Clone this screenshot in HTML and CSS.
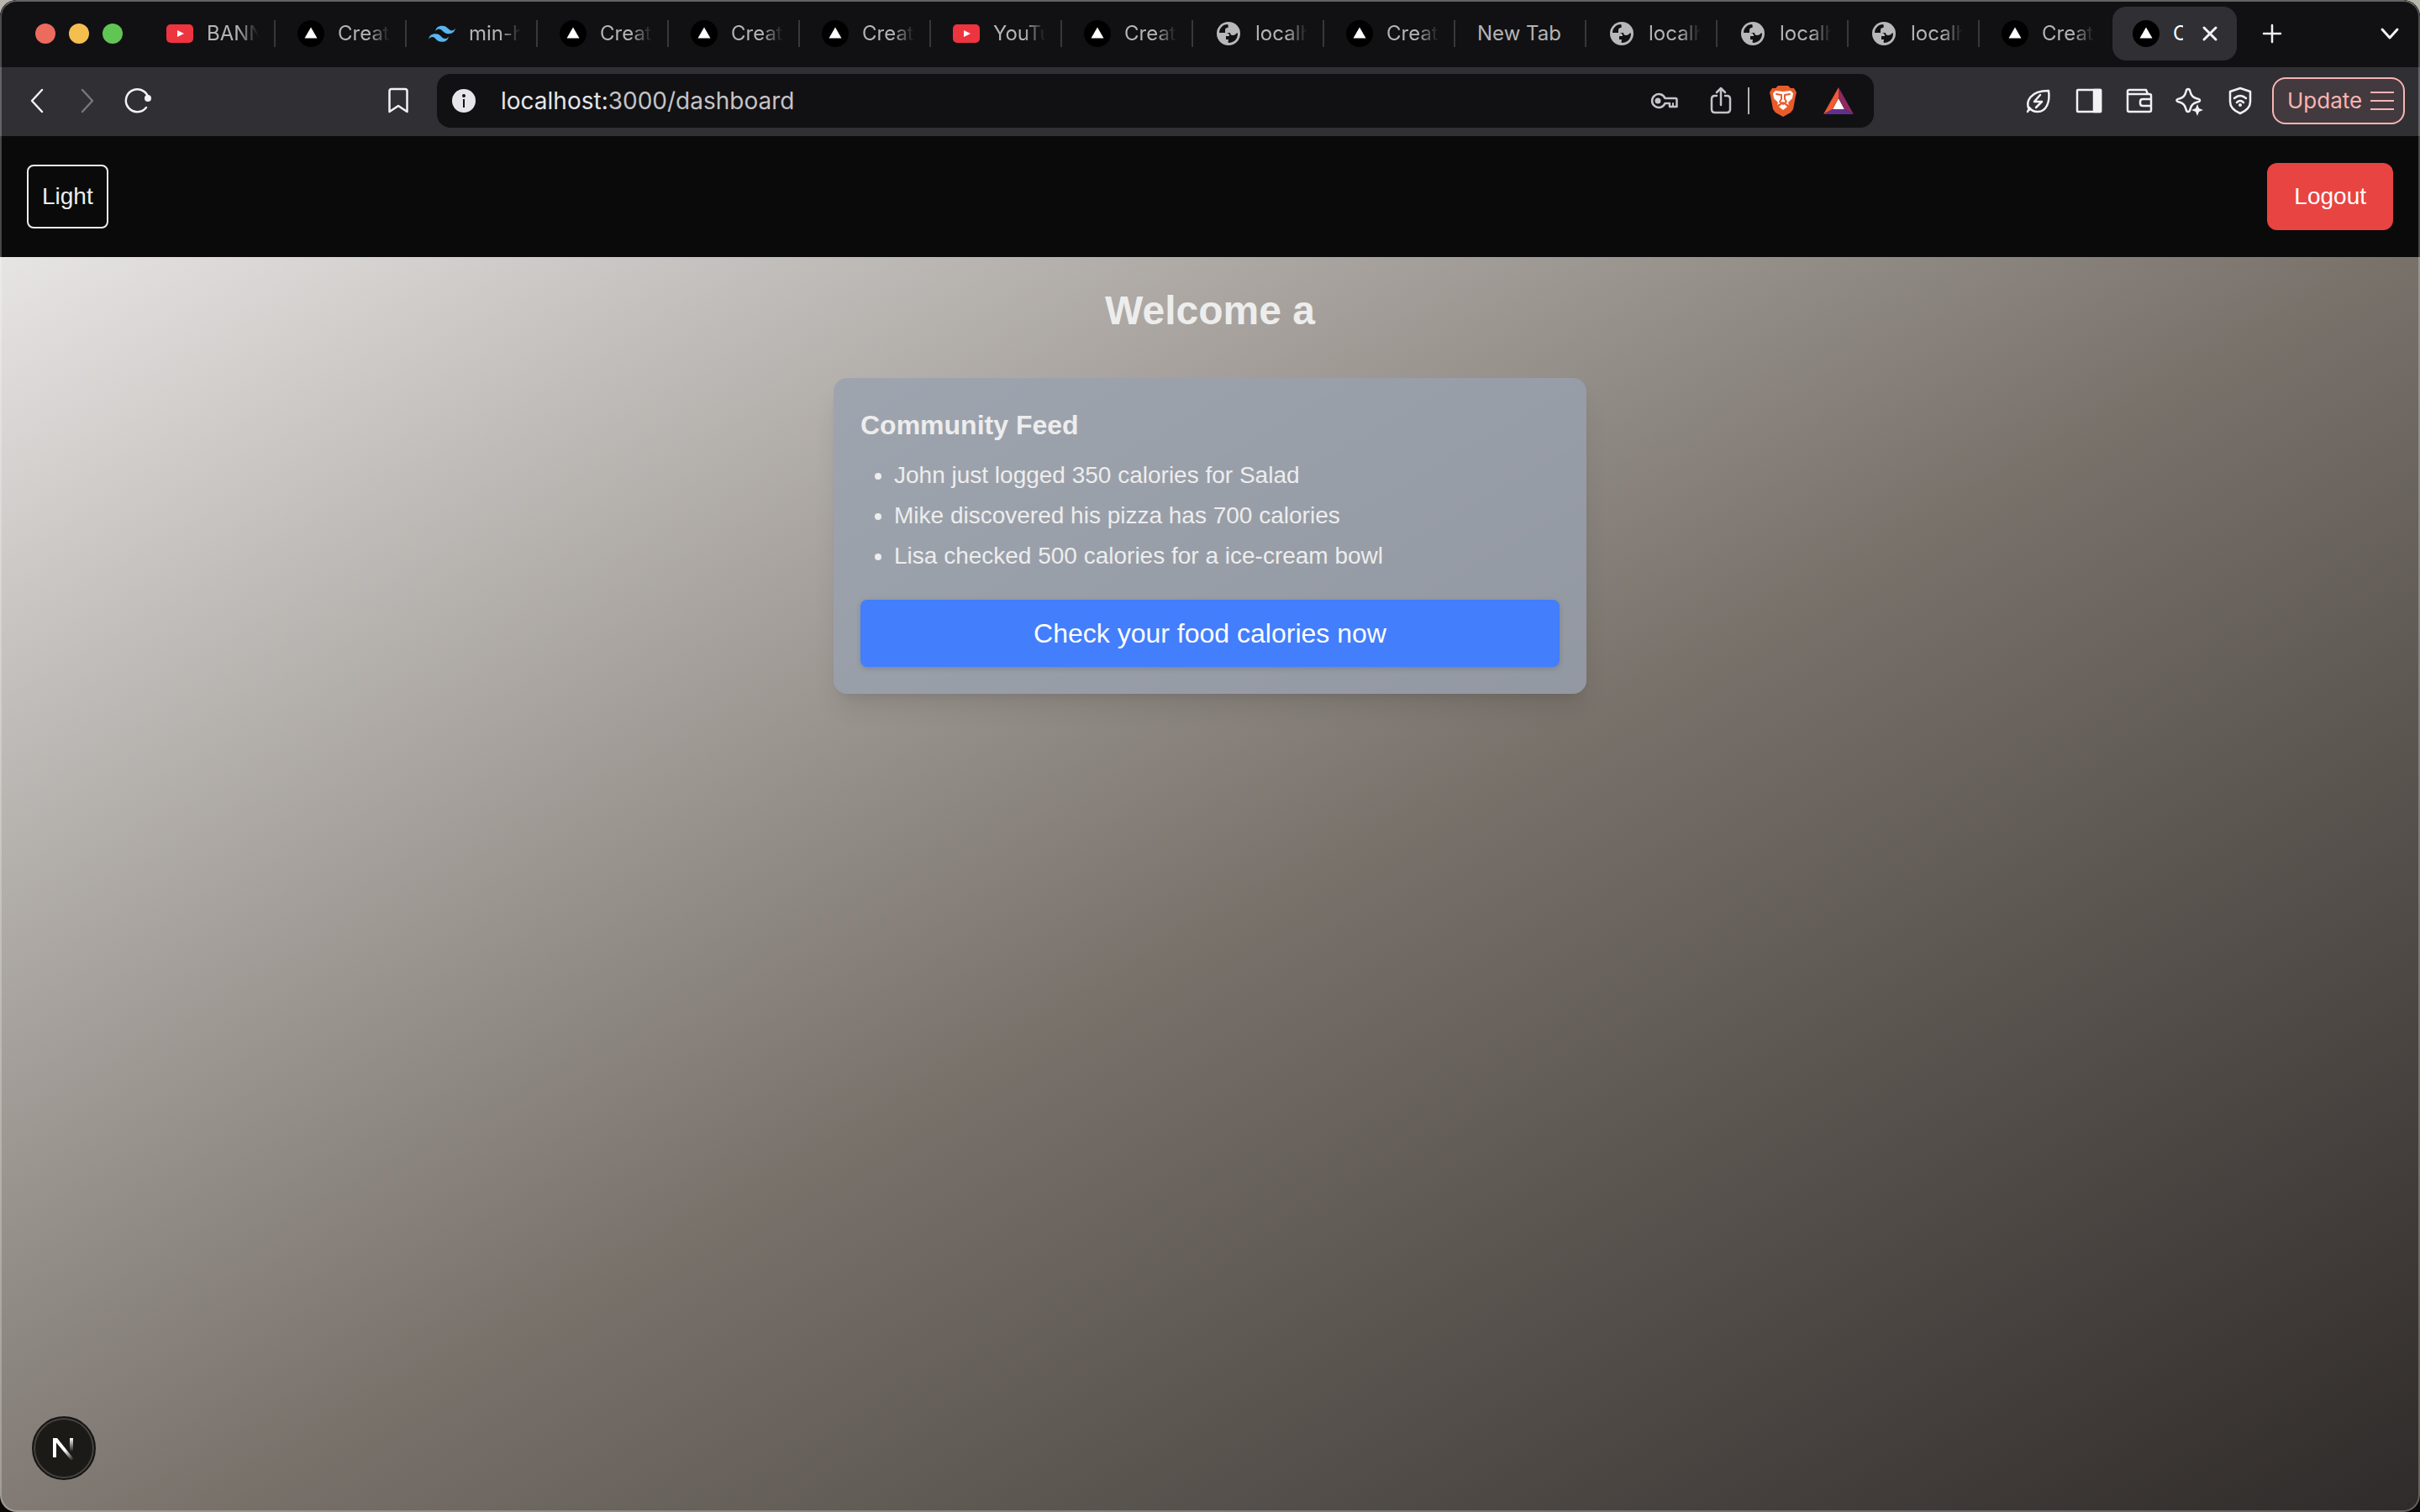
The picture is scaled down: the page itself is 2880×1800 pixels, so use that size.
FILE: index.html
```html
<!DOCTYPE html>
<html lang="en">
<head>
<meta charset="utf-8">
<title>Dashboard</title>
<link rel="stylesheet" href="styles.css">
</head>
<body>
<svg class="defs" aria-hidden="true">
  <symbol id="vercel" viewBox="0 0 32 32"><circle cx="16" cy="16" r="16" fill="#000"/><path d="M16 8.500 23.500 21.500h-15z" fill="#fff"/></symbol>
  <symbol id="youtube" viewBox="0 0 32 32"><rect y="5" width="32" height="22" rx="5" fill="#ee343f"/><path d="M13 12v8l8-4z" fill="#fff"/></symbol>
  <symbol id="tailwind" viewBox="0 0 24 24"><path fill="#5ab5f0" d="M12 5C8.800 5 6.800 6.600 6 9.800c1.200-1.600 2.600-2.200 4.200-1.800.913.230 1.565.890 2.288 1.624C13.666 10.820 15.027 12.200 18 12.200c3.200 0 5.200-1.600 6-4.800-1.200 1.600-2.600 2.200-4.200 1.800-.913-.230-1.565-.890-2.288-1.624C16.337 6.380 14.976 5 12 5zM6 12.200c-3.200 0-5.200 1.600-6 4.800 1.200-1.600 2.600-2.200 4.200-1.800.913.230 1.565.890 2.288 1.624C7.666 18.020 9.027 19.400 12 19.400c3.200 0 5.200-1.600 6-4.800-1.200 1.600-2.600 2.200-4.200 1.800-.913-.230-1.565-.890-2.288-1.624C10.337 13.580 8.976 12.200 6 12.200z"/></symbol>
  <symbol id="globe" viewBox="0 0 32 32"><circle cx="16" cy="16" r="14" fill="#b8b8b9"/><path fill="#111113" d="M15 5C9 5 5 10 5 15h7c4 0 5 1 5 4h-4v4h3c0 1-1 3 0 4 6 0 11-4 11-11l-1-1c-1 2-3 3-5 3s-3-1-3-3h-6v-3c0-2 1-3 3-3 1 0 1-3 0-4z"/></symbol>
</svg>
<div class="window">
  <div class="tabstrip">
    <div class="lights"><i class="light red"></i><i class="light yellow"></i><i class="light green"></i></div>
    <nav class="tabs" aria-label="Tabs">
      <a class="tab" href="#"><svg><use href="#youtube"/></svg><span>BANNED</span></a>
      <a class="tab" href="#"><svg><use href="#vercel"/></svg><span>Create</span></a>
      <a class="tab" href="#"><svg><use href="#tailwind"/></svg><span>min-height</span></a>
      <a class="tab" href="#"><svg><use href="#vercel"/></svg><span>Create</span></a>
      <a class="tab" href="#"><svg><use href="#vercel"/></svg><span>Create</span></a>
      <a class="tab" href="#"><svg><use href="#vercel"/></svg><span>Create</span></a>
      <a class="tab" href="#"><svg><use href="#youtube"/></svg><span>YouTube</span></a>
      <a class="tab" href="#"><svg><use href="#vercel"/></svg><span>Create</span></a>
      <a class="tab" href="#"><svg><use href="#globe"/></svg><span>localhost</span></a>
      <a class="tab" href="#"><svg><use href="#vercel"/></svg><span>Create</span></a>
      <a class="tab plain" href="#"><span>New Tab</span></a>
      <a class="tab" href="#"><svg><use href="#globe"/></svg><span>localhost</span></a>
      <a class="tab" href="#"><svg><use href="#globe"/></svg><span>localhost</span></a>
      <a class="tab" href="#"><svg><use href="#globe"/></svg><span>localhost</span></a>
      <a class="tab last" href="#"><svg><use href="#vercel"/></svg><span>Create</span></a>
    </nav>
    <div class="active-tab"><svg class="fav"><use href="#vercel"/></svg><span>Create</span><button class="icon" aria-label="Close tab"><svg viewBox="0 0 32 32"><path d="M9 9l14 14M23 9 9 23" stroke-width="3"/></svg></button></div>
    <button class="icon new-tab" aria-label="New tab"><svg viewBox="0 0 32 32"><path d="M16 6v20M6 16h20" stroke-width="2.500"/></svg></button>
    <button class="icon tab-search" aria-label="Search tabs"><svg viewBox="0 0 32 32"><path d="m7 11 9 10 9-10" stroke-width="3"/></svg></button>
  </div>
  <div class="toolbar">
    <div class="nav-buttons">
      <button class="icon" aria-label="Back"><svg viewBox="0 0 32 32"><path d="M22 3 10 16l12 13"/></svg></button>
      <button class="icon dim" aria-label="Forward"><svg viewBox="0 0 32 32"><path d="m10 3 12 13-12 13"/></svg></button>
      <button class="icon" aria-label="Reload"><svg viewBox="0 0 32 32"><path d="M26 24A13.500 13.500 0 1 1 28 11"/><circle cx="28" cy="13" r="4" fill="currentColor" stroke="none"/></svg></button>
    </div>
    <button class="icon bookmark" aria-label="Bookmark"><svg viewBox="0 0 32 32"><path d="M8 2h16q2.500 0 2.500 2.500V29L16 22 5.500 29V4.500Q5.500 2 8 2z"/></svg></button>
    <div class="omnibox">
      <svg class="info" viewBox="0 0 28 28"><circle cx="14" cy="14" r="14" fill="#e6e6ea"/><circle cx="14" cy="8" r="2" fill="#111113"/><path d="M14 12v10" stroke="#111113" stroke-width="2"/></svg>
      <div class="url" role="textbox" aria-label="Address">localhost:<span>3000/dashboard</span></div>
      <button class="icon gray" aria-label="Passwords"><svg viewBox="0 0 32 32"><path d="M17.500 13H30a1.500 1.500 0 0 1 1.500 1.500V23H23v-4h-5.500A8 8 0 1 1 17.500 13z" stroke-width="2.500"/><circle cx="9" cy="16" r="3.500" fill="currentColor" stroke="none"/><path d="M27 19v4" stroke-width="2"/></svg></button>
      <button class="icon gray share" aria-label="Share"><svg viewBox="0 0 32 32"><path d="M11 10H9q-4 0-4 4v12q0 4 4 4h14q4 0 4-4V14q0-4-4-4h-2M16 21V1M11 6l5-5 5 5" stroke-width="2.500"/></svg></button>
      <i class="bar"></i>
      <button class="icon shields" aria-label="Shields"><svg viewBox="0 0 32 36"><path fill="#e95c2a" stroke="none" d="M10 0h12l3 3 4 0 3 5-1 4-3 16-3 4-9 5-9-5-3-4L1 12 0 8l3-5h4z"/><path fill="#fff" stroke="none" d="m4 9 3-3 9 1 9-1 3 3-1 6-5 5 1 3-7-4-7 4 1-3-5-5zM16 21l5 4-5 4-5-4z"/><path stroke="#e95c2a" stroke-width="2" d="m8 10 6 1v5l-2 3 4 3 4-3-2-3v-5l6-1"/></svg></button>
      <button class="icon rewards" aria-label="Rewards"><svg viewBox="0 0 36 32"><path fill="#fff" stroke="none" d="M18 13 25 26H11z"/><path fill="#f05a34" stroke="none" d="M18 0v13l-7 13-11 6z"/><path fill="#8f2a61" stroke="none" d="m18 0 18 32-11-6-7-13z"/><path fill="#61308f" stroke="none" d="m0 32 11-6h14l11 6z"/></svg></button>
    </div>
    <div class="extensions">
      <button class="icon" aria-label="Energy saver"><svg viewBox="0 0 32 32"><path d="M5 27C0 17 6 4 28 4c2 14-3 25-13 25-5 0-8-2-10-5M5 25l-2 4M18 9l-7 8h9l-7 7"/></svg></button>
      <button class="icon" aria-label="Sidebar"><svg viewBox="0 0 32 32"><rect x="2" y="3" width="28" height="26" rx="1"/><path d="M22 3h8v26h-8z" fill="currentColor"/></svg></button>
      <button class="icon" aria-label="Wallet"><svg viewBox="0 0 32 32"><path d="M2 8h26q2 0 2 2v17q0 2-2 2H4q-2 0-2-2V5q0-2 2-2h20l2 5M30 14H20q-3 0-3 3v2q0 3 3 3h10"/></svg></button>
      <button class="icon" aria-label="Assistant"><svg viewBox="0 0 32 32"><path d="M14 2q2 0 2.500 3 1.500 7 8.500 8.500 3 .5 3 2t-3 2Q18 19 16.500 26q-.5 3-2.500 3t-2.500-3Q10 19 3.500 17.500q-3-.5-3-2t3-2Q10 12 11.500 5 12 2 14 2z"/><path d="m25 20 2 5 5 2-5 2-2 5-2-5-5-2 5-2z" fill="currentColor" stroke="none"/></svg></button>
      <button class="icon" aria-label="VPN"><svg viewBox="0 0 32 32"><path d="m16 1 12 4v12q0 9-12 14Q4 26 4 17V5zM9 13q7-6 14 0M12 18q4-4 8 0"/><circle cx="16" cy="21" r="2" fill="currentColor" stroke="none"/></svg></button>
    </div>
    <button class="update">Update<svg viewBox="0 0 30 24"><path d="M1 2h28M1 12h28M1 22h28"/></svg></button>
  </div>
  <header class="header">
    <button class="theme">Light</button>
    <button class="logout">Logout</button>
  </header>
  <main class="page">
    <h1>Welcome a</h1>
    <section class="card">
      <h2>Community Feed</h2>
      <ul>
        <li>John just logged 350 calories for Salad</li>
        <li>Mike discovered his pizza has 700 calories</li>
        <li>Lisa checked 500 calories for a ice-cream bowl</li>
      </ul>
      <button class="check">Check your food calories now</button>
    </section>
  </main>
  <button class="devtools" aria-label="Developer tools"><svg viewBox="0 0 40 40"><defs><linearGradient id="ga" x1="22" y1="22" x2="31" y2="34" gradientUnits="userSpaceOnUse"><stop stop-color="#fff"/><stop offset="1" stop-color="#fff" stop-opacity="0"/></linearGradient><linearGradient id="gb" x1="0" y1="8" x2="0" y2="24" gradientUnits="userSpaceOnUse"><stop stop-color="#fff"/><stop offset="1" stop-color="#fff" stop-opacity="0"/></linearGradient></defs><path d="M9 31V8" stroke="#fff" stroke-width="4"/><path d="M7 8h5l20 25-3 2L9 11z" fill="url(#ga)"/><path d="M27 8h4v16h-4z" fill="url(#gb)"/></svg></button>
</div>
</body>
</html>
```
FILE: styles.css
```css
* { box-sizing: border-box; }
html { background: linear-gradient(#b9b6ae 50%, #0b0907 50%); }
body { margin: 0; font-family: "Liberation Sans", Arial, sans-serif; font-size: 28px; line-height: 40px; color: #ededed; }
h1, h2, ul { margin: 0; }
button { font: inherit; color: inherit; background: none; border: 0; padding: 0; }
a { color: inherit; text-decoration: none; }
.defs { display: none; }
.window { position: relative; min-height: 100vh; display: flex; flex-direction: column; border-radius: 20px; overflow: hidden; background: #0a0a0a; }
.window::after { content: ""; position: absolute; inset: 0; border: 2px solid rgba(255, 255, 255, 0.25); border-top-color: rgba(255, 255, 255, 0.35); border-radius: 20px; pointer-events: none; }

.icon { display: flex; flex: none; color: #f2f2f5; }
.icon svg { width: 32px; height: 32px; overflow: visible; fill: none; stroke: currentColor; stroke-width: 3; stroke-linecap: round; stroke-linejoin: round; }
.dim { color: #77777b; }
.gray { color: #c4c4c8; }

.tabstrip { display: flex; align-items: center; height: 80px; padding: 0 20px 0 42px; background: #111113; font: 24px/32px Inter, "Noto Sans", sans-serif; color: #b4b4b6; }
.lights { display: flex; flex: none; gap: 16px; width: 130px; }
.light { width: 24px; height: 24px; border-radius: 50%; }
.red { background: #ed6a5e; }
.yellow { background: #f5bf4f; }
.green { background: #61c554; }
.tabs { display: flex; flex: none; }
.tab { display: flex; align-items: center; gap: 16px; width: 156px; padding: 0 18px 0 26px; border-right: 2px solid #38383b; }
.tab svg { width: 32px; height: 32px; flex: none; }
.tab span { flex: 1; overflow: hidden; white-space: nowrap; mask-image: linear-gradient(to right, #000 60%, transparent); }
.plain { padding-right: 0; }
.plain span { mask-image: none; }
.last { border-color: transparent; }
.active-tab { display: flex; flex: none; align-items: center; gap: 16px; width: 148px; height: 64px; margin: 0 2px; padding: 0 16px 0 24px; border-radius: 16px; background: #302f34; color: #fff; }
.fav { width: 32px; height: 32px; flex: none; }
.active-tab span { width: 12px; overflow: hidden; }
.new-tab { margin-left: 24px; }
.tab-search { margin-left: auto; }

.toolbar { display: flex; align-items: center; height: 82px; padding: 0 18px 2px 28px; background: #302f34; }
.nav-buttons { display: flex; gap: 28px; width: 430px; }
.nav-buttons svg, .bookmark svg, .extensions svg { stroke-width: 2.5; }
.bookmark { margin-right: 30px; }
.omnibox { display: flex; align-items: center; width: 1710px; height: 64px; padding: 0 24px 0 18px; border-radius: 16px; background: #111113; }
.info { width: 28px; height: 28px; margin-right: 30px; }
.url { flex: 1; font: 28px/40px Inter, "Noto Sans", sans-serif; color: #e6e6ea; }
.url span { color: #c4c4c8; }
.share { margin-left: 36px; }
.bar { width: 2px; height: 32px; margin: 0 22px 0 16px; background: #b4b4b6; }
.icon.shields svg, .icon.rewards svg { width: 36px; height: 36px; }
.rewards { margin-left: 30px; }
.extensions { display: flex; gap: 28px; margin: 0 22px 0 auto; }
.update { display: flex; align-items: center; justify-content: space-between; width: 158px; height: 56px; padding: 0 10px 0 16px; border: 2px solid #f8b4b4; border-radius: 16px; background: #423a3e; color: #f8b4b4; font: 26px/32px Inter, "Noto Sans", sans-serif; }
.update svg { width: 30px; height: 24px; stroke: currentColor; stroke-width: 2; }

.header { display: flex; align-items: center; justify-content: space-between; padding: 32px; background: #0a0a0a; }
.theme { padding: 16px; border: 2px solid #ededed; border-radius: 8px; }
.logout { padding: 20px 32px; border-radius: 12px; background: #e84441; color: #fff; }

/* The gradient spans a full viewport below the browser chrome, so its end runs past the fold. */
.page { flex: 1; display: flex; flex-direction: column; align-items: center; gap: 48px; padding: 32px; background: linear-gradient(to bottom right in oklab, #e7e5e4, #78716a, #292524) top / 100% calc(100vh - 162px) no-repeat; }
h1 { font-size: 48px; line-height: 64px; }
.card { width: 100%; max-width: 896px; padding: 32px; border-radius: 16px; background: rgba(153, 161, 175, 0.8); box-shadow: 0 20px 30px -6px rgba(0, 0, 0, 0.1), 0 8px 12px -8px rgba(0, 0, 0, 0.1); }
h2 { font-size: 32px; line-height: 48px; }
ul { display: flex; flex-direction: column; gap: 8px; margin: 16px 0 32px; padding-left: 40px; }
.check { width: 100%; height: 80px; border-radius: 8px; background: #437efd; color: #fff; font-size: 32px; box-shadow: 0 2px 6px rgba(0, 0, 0, 0.15); }
.devtools { position: absolute; left: 38px; bottom: 38px; display: flex; align-items: center; justify-content: center; width: 76px; height: 76px; border: 2px solid #171615; border-radius: 50%; background: #1b1a17; box-shadow: inset 0 0 0 2px #454442; }
.devtools svg { width: 40px; height: 40px; }
```
